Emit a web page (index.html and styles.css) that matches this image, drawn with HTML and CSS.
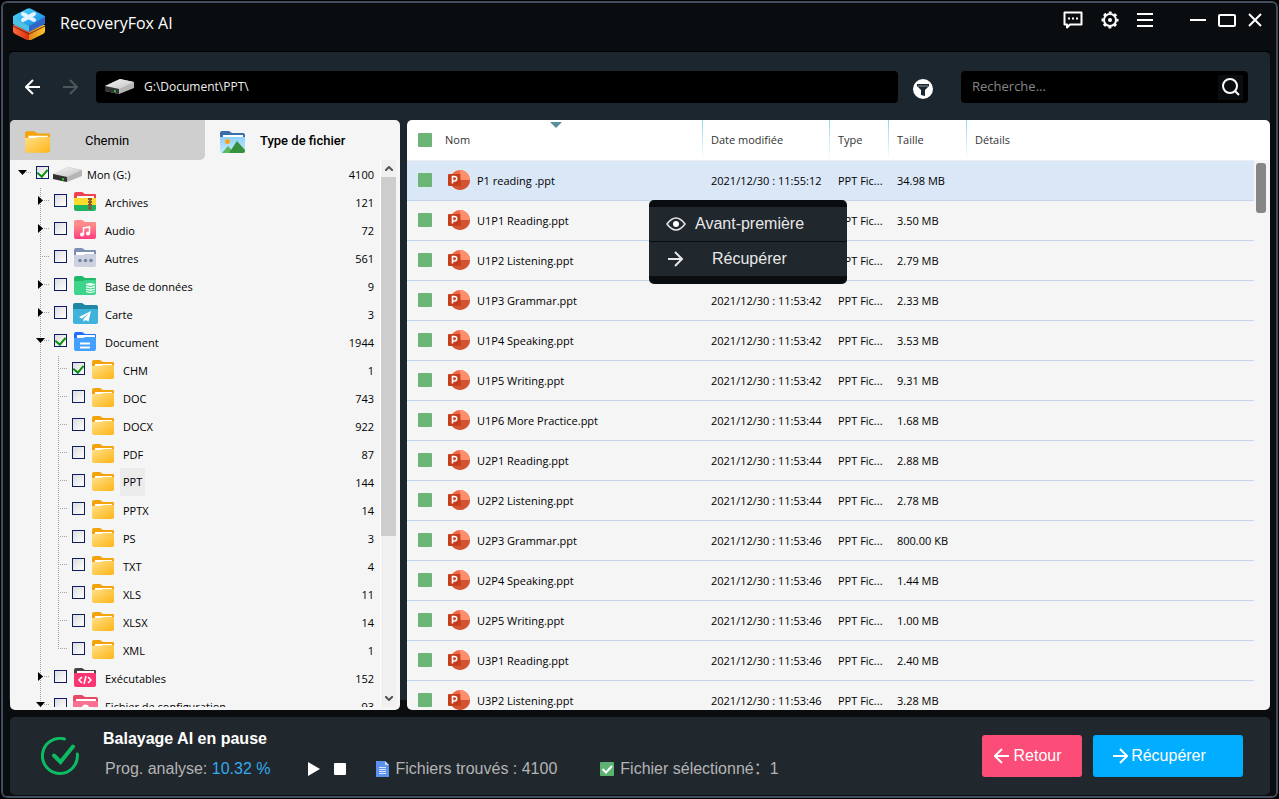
FILE: index.html
```
<!DOCTYPE html>
<html lang="fr">

<head>
    <meta charset="utf-8">
    <title>RecoveryFox AI</title>
    <link rel="stylesheet" href="styles.css">
</head>

<body>
    <!-- shared icons -->
    <svg class="defs" aria-hidden="true">
        <defs>
            <linearGradient id="gYellow" x1="0" y1="0" x2="1" y2="1">
                <stop offset="0" stop-color="#ffe08a" />
                <stop offset="1" stop-color="#fdb515" />
            </linearGradient>
            <linearGradient id="gPink" x1="0" y1="0" x2="0" y2="1">
                <stop offset="0" stop-color="#ff8a8a" />
                <stop offset="1" stop-color="#ff3d7f" />
            </linearGradient>
            <linearGradient id="gSky" x1="0" y1="0" x2="0" y2="1">
                <stop offset="0" stop-color="#8fd0fa" />
                <stop offset="1" stop-color="#c5ecff" />
            </linearGradient>
            <linearGradient id="gDrive" x1="0" y1="0" x2="1" y2="1">
                <stop offset="0" stop-color="#f4f4f4" />
                <stop offset="1" stop-color="#c4c4c4" />
            </linearGradient>
            <linearGradient id="gTop" x1="0" y1="0" x2="1" y2="1">
                <stop offset="0" stop-color="#4fdcff" />
                <stop offset="1" stop-color="#1683e0" />
            </linearGradient>
            <linearGradient id="gBase" x1="0" y1="0" x2="1" y2="0">
                <stop offset="0" stop-color="#ff6a3c" />
                <stop offset=".5" stop-color="#d8310f" />
                <stop offset=".51" stop-color="#e2851a" />
                <stop offset="1" stop-color="#ffc62e" />
            </linearGradient>
        </defs>
        <symbol id="folder" viewBox="0 0 22 19">
            <path d="M0 2a2 2 0 0 1 2-2h6l3 2h10a1 1 0 0 1 1 1v8H0z" fill="#f5a30a" />
            <path d="M3 4h17v4H3z" fill="#fff" />
            <path d="M0 6h9l2-1h11v12a2 2 0 0 1-2 2H2a2 2 0 0 1-2-2z" fill="url(#gYellow)" />
        </symbol>
        <symbol id="drive" viewBox="0 0 29 15">
            <path d="M0 7 15 0l14 3v6L14 15 0 12z" fill="#b5b5b5" />
            <path d="M0 7 15 0l14 3-15 7z" fill="url(#gDrive)" />
            <path d="M0 7l14 3v5L0 12z" fill="#333" />
            <path d="M9 11l2 .5v2L9 13z" fill="#2bd02b" />
        </symbol>
        <symbol id="archives" viewBox="0 0 22 19">
            <path d="M0 2a2 2 0 0 1 2-2h6l3 2h10a1 1 0 0 1 1 1v6H0z" fill="#ef4250" />
            <path d="M3 4h17v4H3z" fill="#fff" />
            <path d="M0 6h22v7H0z" fill="#fddc2c" />
            <path d="M0 13h22v4a2 2 0 0 1-2 2H2a2 2 0 0 1-2-2z" fill="#1fb364" />
            <path d="M16 6v12" stroke="#8a5a3c" stroke-width="4" stroke-dasharray="2 1" />
            <path d="M16 6v12" stroke="#8a5a3c" stroke-width="2" />
        </symbol>
        <symbol id="audio" viewBox="0 0 22 19">
            <path d="M0 2a2 2 0 0 1 2-2h6l3 2h10a1 1 0 0 1 1 1v8H0z" fill="#ff8b8b" />
            <path d="M0 5h22v12a2 2 0 0 1-2 2H2a2 2 0 0 1-2-2z" fill="url(#gPink)" />
            <path d="M9.500 14.500V8l6-1v6" fill="none" stroke="#fff" stroke-width="1.500" />
            <circle cx="8" cy="14.500" r="2" fill="#fff" />
            <circle cx="14" cy="13.500" r="2" fill="#fff" />
        </symbol>
        <symbol id="other" viewBox="0 0 22 19">
            <path d="M0 2a2 2 0 0 1 2-2h6l3 2h10a1 1 0 0 1 1 1v8H0z" fill="#7f8fb0" />
            <path d="M2 4h18v4H2z" fill="#fff" />
            <path d="M0 7h9l2-1h11v11a2 2 0 0 1-2 2H2a2 2 0 0 1-2-2z" fill="#cbd1de" />
            <g fill="#7480a5"><circle cx="6" cy="12.500" r="1.700" /><circle cx="11.500" cy="12.500" r="1.700" /><circle cx="17" cy="12.500" r="1.700" /></g>
        </symbol>
        <symbol id="database" viewBox="0 0 22 19">
            <path d="M0 2a2 2 0 0 1 2-2h6l3 2h10a1 1 0 0 1 1 1v8H0z" fill="#22b869" />
            <path d="M0 5h9l2-1h11v13a2 2 0 0 1-2 2H2a2 2 0 0 1-2-2z" fill="#3fd48b" />
            <path d="M12 8q4-2 9 0v8q-5 2-9 0z" fill="#eafff3" />
            <path d="M12 9.500q5 2 9 0M12 12q5 2 9 0M12 14.500q5 2 9 0" fill="none" stroke="#3fd48b" />
        </symbol>
        <symbol id="map" viewBox="0 0 25 22">
            <path d="M0 2a2 2 0 0 1 2-2h7l3 2h11a2 2 0 0 1 2 2v6H0z" fill="#1f86a4" />
            <path d="M0 6h25v13a2 2 0 0 1-2 2H2a2 2 0 0 1-2-2z" fill="#3fb3dc" />
            <path d="M18 8 6 14l3 1.500L16 10l-5.500 6v3l2-2 3 1.500z" fill="#fff" />
        </symbol>
        <symbol id="doc" viewBox="0 0 22 19">
            <path d="M0 2a2 2 0 0 1 2-2h6l3 2h10a1 1 0 0 1 1 1v8H0z" fill="#2070ff" />
            <path d="M3 3h18v5H3z" fill="#fff" />
            <path d="M0 6h9l2-1h11v12a2 2 0 0 1-2 2H2a2 2 0 0 1-2-2z" fill="#43a0ff" />
            <path d="M6 11.500h10M6 15.500h10" stroke="#fff" stroke-width="2" />
        </symbol>
        <symbol id="exe" viewBox="0 0 22 19">
            <path d="M0 2a2 2 0 0 1 2-2h6l3 2h10a1 1 0 0 1 1 1v8H0z" fill="#444" />
            <path d="M3 3h17v4H3z" fill="#fff" />
            <path d="M0 5h22v12a2 2 0 0 1-2 2H2a2 2 0 0 1-2-2z" fill="#fb3472" />
            <path d="M8 9l-3 3 3 3M14 9l3 3-3 3M12 8l-2 8" fill="none" stroke="#fff" stroke-width="1.500" />
        </symbol>
        <symbol id="config" viewBox="0 0 25 22">
            <path d="M0 2a2 2 0 0 1 2-2h7l3 2h11a2 2 0 0 1 2 2v6H0z" fill="#e64a67" />
            <path d="M3 4h20v5H3z" fill="#fff" />
            <path d="M0 6h25v13a2 2 0 0 1-2 2H2a2 2 0 0 1-2-2z" fill="#fb6f92" />
            <circle cx="12.500" cy="13" r="3.500" fill="#fff" />
        </symbol>
        <symbol id="picture" viewBox="0 0 25 22">
            <path d="M0 2a2 2 0 0 1 2-2h7l3 2h11a2 2 0 0 1 2 2v6H0z" fill="#3a6ea8" />
            <path d="M3 4h20v4H3z" fill="#fff" />
            <path d="M0 6h25v14a2 2 0 0 1-2 2H2a2 2 0 0 1-2-2z" fill="url(#gSky)" />
            <circle cx="7.500" cy="10.500" r="2.500" fill="#f9a51a" />
            <path d="M2 22l6-7 7 7z" fill="#5cb85c" />
            <path d="M9 22l8-12 8 9v1a2 2 0 0 1-2 2z" fill="#36913f" />
        </symbol>
        <symbol id="ppt" viewBox="0 0 22 22">
            <circle cx="12" cy="11" r="10" fill="#ed6c47" />
            <path d="M12 1a10 10 0 0 1 10 10H12z" fill="#ff8f6b" />
            <path d="M2 11h20a10 10 0 0 1-20 0z" fill="#d35230" />
            <rect x="1" y="5" width="12" height="12" fill="#a33015" opacity=".35" />
            <rect x="0" y="5" width="12" height="12" rx="1" fill="#c43e1c" />
            <path d="M4.500 14.500v-7h2a2 2 0 0 1 0 4.500h-2" fill="none" stroke="#fff" stroke-width="1.600" />
        </symbol>
        <symbol id="left" viewBox="0 0 16 16">
            <path d="M15 8H1.500M8 1 1 8l7 7" fill="none" stroke="currentColor" stroke-width="2" />
        </symbol>
        <symbol id="right" viewBox="0 0 16 16">
            <path d="M1 8h13.500M8 1l7 7-7 7" fill="none" stroke="currentColor" stroke-width="2" />
        </symbol>
        <symbol id="open" viewBox="0 0 26 10">
            <path d="M8 2h9l-4.500 5z" />
        </symbol>
        <symbol id="closed" viewBox="0 0 26 10">
            <path d="M10 0v9l5-4.500z" />
        </symbol>
    </svg>

    <div class="window">
        <header class="titlebar">
            <svg class="logo" width="32" height="32" viewBox="0 0 32 32">
                <path d="M0 17v6q0 2 2 3l12 6q2 1 4 0l12-6q2-1 2-3v-6z" fill="url(#gBase)" />
                <path d="M0 18l16 8 16-8" fill="none" stroke="#7a2a12" stroke-width="1" />
                <path d="M0 8v8l16 8 16-8V8z" fill="#2f66c8" />
                <path d="M0 8v8l16 8V16z" fill="#4cc3e4" />
                <path d="M0 8.500Q0 8 2 7L14 .8q2-1 4 0L30 7q2 1 2 1.500T30 10l-12 7q-2 1-4 0L2 10Q0 9 0 8.500z" fill="url(#gTop)" />
                <path d="M10 6l11 6M21 6l-11 6" stroke="#e4f4ff" stroke-width="4" stroke-linecap="round" />
            </svg>
            <h1>RecoveryFox AI</h1>
            <div class="tools">
                <button aria-label="Messages"><svg width="20" height="18" viewBox="0 0 20 18"><path d="M1.500 1.500h17v12H7l-3 3v-3H1.500z" fill="none" stroke="#fff" stroke-width="2" stroke-linejoin="round" /><path d="M5 6.500h2v2H5zM9 6.500h2v2H9zM13 6.500h2v2h-2z" fill="#fff" /></svg></button>
                <button aria-label="Paramètres"><svg width="18" height="18" viewBox="0 0 18 18" fill="none" stroke="#fff"><circle cx="9" cy="9" r="6" stroke-width="2" /><circle cx="9" cy="9" r="7.500" stroke-width="2" stroke-dasharray="3 2.890" stroke-dashoffset="1.500" /><circle cx="9" cy="9" r="2" fill="#fff" stroke="none" /></svg></button>
                <button aria-label="Menu"><svg width="16" height="16" viewBox="0 0 16 16"><path d="M0 2h16M0 8h16M0 14h16" stroke="#fff" stroke-width="2" /></svg></button>
            </div>
            <div class="controls">
                <button aria-label="Réduire"><svg width="16" height="16" viewBox="0 0 16 16"><path d="M0 8h16" stroke="#fff" stroke-width="2" /></svg></button>
                <button aria-label="Agrandir"><svg width="18" height="14" viewBox="0 0 18 14"><rect x="1" y="2" width="16" height="11" rx="1" fill="none" stroke="#fff" stroke-width="2" /></svg></button>
                <button aria-label="Fermer"><svg width="14" height="14" viewBox="0 0 14 14"><path d="M1 1l12 12M13 1 1 13" stroke="#fff" stroke-width="2" /></svg></button>
            </div>
        </header>

        <main>
            <div class="toolbar">
                <button class="nav" aria-label="Précédent"><svg width="16" height="16"><use href="#left" /></svg></button>
                <button class="nav off" aria-label="Suivant"><svg width="16" height="16"><use href="#right" /></svg></button>
                <div class="path">
                    <svg width="29" height="15"><use href="#drive" /></svg>
                    <span>G:\Document\PPT\</span>
                </div>
                <button class="filter" aria-label="Filtrer"><svg width="20" height="20" viewBox="0 0 20 20"><circle cx="10" cy="10" r="10" fill="#fff" /><path d="M4 5h12v2l-4 4v6l-4-1v-5L4 7z" fill="#1b262e" /><path d="M5 7h10" stroke="#8b949a" /></svg></button>
                <div class="search">
                    <input type="text" placeholder="Recherche..." aria-label="Recherche">
                    <button aria-label="Rechercher"><svg width="18" height="18" viewBox="0 0 18 18"><circle cx="8" cy="8" r="7" fill="none" stroke="#fff" stroke-width="2" /><path d="M13 13l4 4" stroke="#fff" stroke-width="2" /></svg></button>
                </div>
            </div>

            <div class="panels">
                <aside class="side">
                    <div class="tabs">
                        <button class="tab"><svg width="25" height="22"><use href="#folder" /></svg><span>Chemin</span></button>
                        <button class="tab active"><svg width="25" height="22"><use href="#picture" /></svg><span>Type de fichier</span></button>
                    </div>
                    <div class="tree-wrap">
                        <ul class="tree">
                            <li>
                                <div class="row"><button class="toggle" aria-label="Replier"><svg><use href="#open" /></svg></button><label><input type="checkbox" checked><svg class="ico wide"><use href="#drive" /></svg><span>Mon (G:)</span></label><b>4100</b></div>
                                <ul>
                                    <li><div class="row"><button class="toggle" aria-label="Déplier"><svg><use href="#closed" /></svg></button><label><input type="checkbox"><svg class="ico"><use href="#archives" /></svg><span>Archives</span></label><b>121</b></div></li>
                                    <li><div class="row"><button class="toggle" aria-label="Déplier"><svg><use href="#closed" /></svg></button><label><input type="checkbox"><svg class="ico"><use href="#audio" /></svg><span>Audio</span></label><b>72</b></div></li>
                                    <li><div class="row"><i class="toggle"></i><label><input type="checkbox"><svg class="ico"><use href="#other" /></svg><span>Autres</span></label><b>561</b></div></li>
                                    <li><div class="row"><button class="toggle" aria-label="Déplier"><svg><use href="#closed" /></svg></button><label><input type="checkbox"><svg class="ico"><use href="#database" /></svg><span>Base de données</span></label><b>9</b></div></li>
                                    <li><div class="row"><button class="toggle" aria-label="Déplier"><svg><use href="#closed" /></svg></button><label><input type="checkbox"><svg class="ico big"><use href="#map" /></svg><span>Carte</span></label><b>3</b></div></li>
                                    <li>
                                        <div class="row"><button class="toggle" aria-label="Replier"><svg><use href="#open" /></svg></button><label><input type="checkbox" checked><svg class="ico"><use href="#doc" /></svg><span>Document</span></label><b>1944</b></div>
                                        <ul class="leaves">
                                            <li><div class="row"><i class="toggle"></i><label><input type="checkbox" checked><svg class="ico"><use href="#folder" /></svg><span>CHM</span></label><b>1</b></div></li>
                                            <li><div class="row"><i class="toggle"></i><label><input type="checkbox"><svg class="ico"><use href="#folder" /></svg><span>DOC</span></label><b>743</b></div></li>
                                            <li><div class="row"><i class="toggle"></i><label><input type="checkbox"><svg class="ico"><use href="#folder" /></svg><span>DOCX</span></label><b>922</b></div></li>
                                            <li><div class="row"><i class="toggle"></i><label><input type="checkbox"><svg class="ico"><use href="#folder" /></svg><span>PDF</span></label><b>87</b></div></li>
                                            <li><div class="row"><i class="toggle"></i><label><input type="checkbox"><svg class="ico"><use href="#folder" /></svg><span class="current">PPT</span></label><b>144</b></div></li>
                                            <li><div class="row"><i class="toggle"></i><label><input type="checkbox"><svg class="ico"><use href="#folder" /></svg><span>PPTX</span></label><b>14</b></div></li>
                                            <li><div class="row"><i class="toggle"></i><label><input type="checkbox"><svg class="ico"><use href="#folder" /></svg><span>PS</span></label><b>3</b></div></li>
                                            <li><div class="row"><i class="toggle"></i><label><input type="checkbox"><svg class="ico"><use href="#folder" /></svg><span>TXT</span></label><b>4</b></div></li>
                                            <li><div class="row"><i class="toggle"></i><label><input type="checkbox"><svg class="ico"><use href="#folder" /></svg><span>XLS</span></label><b>11</b></div></li>
                                            <li><div class="row"><i class="toggle"></i><label><input type="checkbox"><svg class="ico"><use href="#folder" /></svg><span>XLSX</span></label><b>14</b></div></li>
                                            <li><div class="row"><i class="toggle"></i><label><input type="checkbox"><svg class="ico"><use href="#folder" /></svg><span>XML</span></label><b>1</b></div></li>
                                        </ul>
                                    </li>
                                    <li><div class="row"><button class="toggle" aria-label="Déplier"><svg><use href="#closed" /></svg></button><label><input type="checkbox"><svg class="ico"><use href="#exe" /></svg><span>Exécutables</span></label><b>152</b></div></li>
                                    <li><div class="row"><button class="toggle" aria-label="Replier"><svg><use href="#open" /></svg></button><label><input type="checkbox"><svg class="ico big"><use href="#config" /></svg><span>Fichier de configuration</span></label><b>93</b></div></li>
                                </ul>
                            </li>
                        </ul>
                        <div class="scroll">
                            <button aria-label="Monter"><svg width="8" height="5" viewBox="0 0 8 5"><path d="M0 5l4-4 4 4" fill="none" stroke="#555" stroke-width="2" /></svg></button>
                            <div class="track"><div class="thumb"></div></div>
                            <button aria-label="Descendre"><svg width="8" height="5" viewBox="0 0 8 5"><path d="M0 0l4 4 4-4" fill="none" stroke="#555" stroke-width="2" /></svg></button>
                        </div>
                    </div>
                </aside>

                <section class="files">
                    <div class="list">
                        <table>
                            <colgroup>
                                <col class="c-name">
                                <col class="c-date">
                                <col class="c-type">
                                <col class="c-size">
                                <col>
                            </colgroup>
                            <thead>
                                <tr>
                                    <th><label><input type="checkbox" aria-label="Tout sélectionner">Nom</label></th>
                                    <th>Date modifiée</th>
                                    <th>Type</th>
                                    <th>Taille</th>
                                    <th>Détails</th>
                                </tr>
                            </thead>
                            <tbody>
                                <tr class="selected">
                                    <td><label><input type="checkbox"><svg><use href="#ppt" /></svg>P1 reading .ppt</label></td>
                                    <td>2021/12/30 : 11:55:12</td><td>PPT Fic...</td><td>34.98 MB</td><td></td>
                                </tr>
                                <tr>
                                    <td><label><input type="checkbox"><svg><use href="#ppt" /></svg>U1P1 Reading.ppt</label></td>
                                    <td>2021/12/30 : 11:53:42</td><td>PPT Fic...</td><td>3.50 MB</td><td></td>
                                </tr>
                                <tr>
                                    <td><label><input type="checkbox"><svg><use href="#ppt" /></svg>U1P2 Listening.ppt</label></td>
                                    <td>2021/12/30 : 11:53:42</td><td>PPT Fic...</td><td>2.79 MB</td><td></td>
                                </tr>
                                <tr>
                                    <td><label><input type="checkbox"><svg><use href="#ppt" /></svg>U1P3 Grammar.ppt</label></td>
                                    <td>2021/12/30 : 11:53:42</td><td>PPT Fic...</td><td>2.33 MB</td><td></td>
                                </tr>
                                <tr>
                                    <td><label><input type="checkbox"><svg><use href="#ppt" /></svg>U1P4 Speaking.ppt</label></td>
                                    <td>2021/12/30 : 11:53:42</td><td>PPT Fic...</td><td>3.53 MB</td><td></td>
                                </tr>
                                <tr>
                                    <td><label><input type="checkbox"><svg><use href="#ppt" /></svg>U1P5 Writing.ppt</label></td>
                                    <td>2021/12/30 : 11:53:42</td><td>PPT Fic...</td><td>9.31 MB</td><td></td>
                                </tr>
                                <tr>
                                    <td><label><input type="checkbox"><svg><use href="#ppt" /></svg>U1P6 More Practice.ppt</label></td>
                                    <td>2021/12/30 : 11:53:44</td><td>PPT Fic...</td><td>1.68 MB</td><td></td>
                                </tr>
                                <tr>
                                    <td><label><input type="checkbox"><svg><use href="#ppt" /></svg>U2P1 Reading.ppt</label></td>
                                    <td>2021/12/30 : 11:53:44</td><td>PPT Fic...</td><td>2.88 MB</td><td></td>
                                </tr>
                                <tr>
                                    <td><label><input type="checkbox"><svg><use href="#ppt" /></svg>U2P2 Listening.ppt</label></td>
                                    <td>2021/12/30 : 11:53:44</td><td>PPT Fic...</td><td>2.78 MB</td><td></td>
                                </tr>
                                <tr>
                                    <td><label><input type="checkbox"><svg><use href="#ppt" /></svg>U2P3 Grammar.ppt</label></td>
                                    <td>2021/12/30 : 11:53:46</td><td>PPT Fic...</td><td>800.00 KB</td><td></td>
                                </tr>
                                <tr>
                                    <td><label><input type="checkbox"><svg><use href="#ppt" /></svg>U2P4 Speaking.ppt</label></td>
                                    <td>2021/12/30 : 11:53:46</td><td>PPT Fic...</td><td>1.44 MB</td><td></td>
                                </tr>
                                <tr>
                                    <td><label><input type="checkbox"><svg><use href="#ppt" /></svg>U2P5 Writing.ppt</label></td>
                                    <td>2021/12/30 : 11:53:46</td><td>PPT Fic...</td><td>1.00 MB</td><td></td>
                                </tr>
                                <tr>
                                    <td><label><input type="checkbox"><svg><use href="#ppt" /></svg>U3P1 Reading.ppt</label></td>
                                    <td>2021/12/30 : 11:53:46</td><td>PPT Fic...</td><td>2.40 MB</td><td></td>
                                </tr>
                                <tr>
                                    <td><label><input type="checkbox"><svg><use href="#ppt" /></svg>U3P2 Listening.ppt</label></td>
                                    <td>2021/12/30 : 11:53:46</td><td>PPT Fic...</td><td>3.28 MB</td><td></td>
                                </tr>
                            </tbody>
                        </table>
                    </div>
                    <div class="bar"><div class="bar-thumb"></div></div>
                    <div class="menu">
                        <button><svg width="20" height="14" viewBox="0 0 20 14"><path d="M1 7q9-12 18 0-9 12-18 0z" fill="none" stroke="#e8e8e8" stroke-width="1.500" /><circle cx="10" cy="7" r="3" fill="#fff" /></svg><span>Avant-première</span></button>
                        <button><svg width="18" height="16"><use href="#right" /></svg><span>Récupérer</span></button>
                    </div>
                </section>
            </div>
        </main>

        <footer>
            <svg class="done" width="38" height="38" viewBox="0 0 38 38" fill="none" stroke="#0dbb62" stroke-width="3" stroke-linecap="round">
                <path d="M23.500 2A17.500 17.500 0 1 0 36.300 17" />
                <path d="M13 18.500l6.500 6.500L32 9.500" stroke-width="4" />
            </svg>
            <div class="status">
                <h2>Balayage AI en pause</h2>
                <div class="stats">
                    <span class="progress">Prog. analyse: <em>10.32 %</em></span>
                    <button aria-label="Reprendre"><svg width="12" height="14" viewBox="0 0 12 14"><path d="M0 0l12 7-12 7z" fill="#fff" /></svg></button>
                    <button aria-label="Arrêter"><svg width="12" height="12" viewBox="0 0 12 12"><rect width="12" height="12" rx="1" fill="#fff" /></svg></button>
                    <span class="found"><svg width="13" height="16" viewBox="0 0 13 16"><path d="M0 0h9l4 4v12H0z" fill="#5b92ee" /><path d="M9 0v4h4z" fill="#c6dbff" /><path d="M3 6.500h7M3 8.500h7M3 10.500h7M3 12.500h7" stroke="#dbe8ff" /></svg>Fichiers trouvés : 4100</span>
                    <span class="picked"><svg width="14" height="14" viewBox="0 0 14 14"><rect width="14" height="14" rx="1" fill="#5cb270" /><path d="M2.500 7l3.500 3.500L12 4" fill="none" stroke="#fff" stroke-width="2" /></svg>Fichier sélectionné：1</span>
                </div>
            </div>
            <button class="btn back"><svg width="16" height="16"><use href="#left" /></svg>Retour</button>
            <button class="btn recover"><svg width="16" height="16"><use href="#right" /></svg>Récupérer</button>
        </footer>
    </div>
</body>

</html>
```
FILE: styles.css
```
* {
    box-sizing: border-box;
}

body {
    margin: 0;
    background: #000;
    font-family: 'Open Sans', sans-serif;
    font-size: 11px;
    color: #000;
}

button {
    margin: 0;
    padding: 0;
    border: 0;
    background: none;
    font: inherit;
    color: inherit;
    display: flex;
    align-items: center;
    justify-content: center;
    cursor: pointer;
}

svg {
    display: block;
    flex: none;
}

.defs {
    position: absolute;
    width: 0;
    height: 0;
}

.window {
    height: 100vh;
    border: 1px solid #000;
    border-radius: 7px;
    box-shadow: inset 0 0 0 2px #434d60;
    background: #0a0d10;
    padding: 3px 8px 3px 8px;
    display: flex;
    flex-direction: column;
}

/* title bar */
.titlebar {
    height: 48px;
    flex: none;
    display: flex;
    align-items: flex-start;
    padding: 4px 8px 0 4px;
    border-bottom: 1px solid #000;
}

h1 {
    margin: 4px auto 0 15px;
    font-size: 16px;
    line-height: 22px;
    font-weight: normal;
    color: #fff;
}

.tools,
.controls {
    display: flex;
    align-items: center;
    height: 24px;
    gap: 18px;
}

.controls {
    margin-left: 37px;
    gap: 12px;
}

/* work area */
main {
    flex: 1;
    min-height: 0;
    display: flex;
    flex-direction: column;
    background: linear-gradient(#1b262e, #1b262e) no-repeat 0 0 / 100% calc(100% - 10px);
    border-radius: 5px 5px 0 0;
}

.toolbar {
    display: flex;
    align-items: center;
    padding: 19px 22px 17px 11px;
}

.nav {
    width: 26px;
    height: 26px;
    margin-right: 11px;
    color: #fff;
}

.nav.off {
    margin-right: 13px;
    color: #4c565d;
}

.path {
    flex: 1;
    height: 32px;
    background: #000;
    border-radius: 4px;
    display: flex;
    align-items: center;
    gap: 10px;
    padding: 0 9px 2px;
    font-size: 12px;
    color: #eee;
}

.filter {
    width: 30px;
    height: 26px;
    margin: 4px 23px 0 10px;
}

.search {
    width: 287px;
    height: 32px;
    background: #000;
    border-radius: 4px;
    display: flex;
    align-items: center;
}

.search input {
    flex: 1;
    min-width: 0;
    height: 28px;
    margin-bottom: 2px;
    padding: 0 11px;
    border: 0;
    outline: 0;
    background: none;
    font: inherit;
    font-size: 13px;
    color: #fff;
}

.search input::placeholder {
    color: #868686;
}

.search button {
    width: 25px;
    height: 25px;
    margin-right: 5px;
    background: #0a0d10;
}

.panels {
    flex: 1;
    min-height: 0;
    display: flex;
    gap: 7px;
    padding-left: 1px;
}

/* left panel */
.side {
    width: 390px;
    display: flex;
    flex-direction: column;
    background: #f5f5f5;
    border-radius: 5px;
    overflow: hidden;
}

.tabs {
    display: flex;
    height: 40px;
    flex: none;
}

.tab {
    flex: 1;
    justify-content: flex-start;
    padding-left: 15px;
    font-family: Roboto, sans-serif;
    font-size: 13px;
}

.tab.active {
    font-weight: 500;
}

.tab svg {
    margin-top: 4px;
}

.tab span {
    margin-left: 15px;
}

.tab:not(.active) {
    background: #cfcfcf;
    border-radius: 0 0 5px 0;
}

.tab:not(.active) span {
    margin-left: 35px;
}

.tree-wrap {
    flex: 1;
    min-height: 0;
    display: flex;
    padding: 0 4px 3px 0;
}

.tree {
    flex: 1;
    overflow: hidden;
    border-right: 1px solid #fff;
}

ul {
    list-style: none;
    margin: 0;
    padding: 0;
}

li ul {
    padding-left: 18px;
    background: repeating-linear-gradient(#a0a0a0 0 1px, transparent 1px 2px) no-repeat 30px 0 / 1px 100%;
}

li .leaves {
    background-size: 1px calc(100% - 15px);
}

.row {
    display: flex;
    align-items: center;
    height: 28px;
    padding-right: 6px;
}

.row label {
    display: flex;
    align-items: center;
    flex: 1;
}

.row b {
    font-weight: normal;
}

.toggle {
    width: 26px;
    height: 10px;
    margin-bottom: 2px;
    background: repeating-linear-gradient(to right, #a0a0a0 0 1px, transparent 1px 2px) no-repeat 12px 4px / 10px 1px;
}

.toggle svg {
    width: 26px;
    height: 10px;
}

.row input {
    appearance: none;
    width: 13px;
    height: 13px;
    margin: 0 0 3px;
    border: 1px solid #0d1c63;
    background: linear-gradient(135deg, #dcdcdc, #fff);
    display: grid;
    place-items: center;
}

.row input:checked::after {
    content: "";
    width: 5px;
    height: 8px;
    margin-bottom: 2px;
    border: solid #0a8f0a;
    border-width: 0 2px 2px 0;
    transform: rotate(40deg);
}

.ico {
    width: 22px;
    height: 19px;
    margin: 0 9px 2px 7px;
}

.ico.big {
    width: 25px;
    height: 22px;
    margin: 0 7px 0 6px;
}

.ico.wide {
    width: 29px;
    height: 15px;
    margin: 0 5px 0 4px;
}

.current {
    background: #ebebeb;
    line-height: 28px;
    margin: 0 -3px;
    padding: 0 3px;
}

.scroll {
    width: 15px;
    display: flex;
    flex-direction: column;
    background: #f0f0f0;
}

.scroll button {
    height: 17px;
}

.track {
    flex: 1;
}

.thumb {
    height: 70%;
    background: #cdcdcd;
}

/* right panel */
.files {
    flex: 1;
    min-width: 0;
    display: flex;
    position: relative;
    background: linear-gradient(#fff 40px, #f5f5f5 40px);
    border-radius: 5px;
}

.list {
    flex: 1;
    overflow: hidden;
    border-radius: 5px 0 0 5px;
}

table {
    width: 100%;
    table-layout: fixed;
    border-collapse: separate;
    border-spacing: 0;
}

.c-name {
    width: 295px;
}

.c-date {
    width: 127px;
}

.c-type {
    width: 59px;
}

.c-size {
    width: 78px;
}

th,
td {
    height: 40px;
    padding: 0 0 1px 9px;
    text-align: left;
    font-weight: normal;
    white-space: nowrap;
}

th {
    height: 41px;
    color: #333;
    border-bottom: 1px solid #eee;
    background: linear-gradient(#8fd6ec, #fff) no-repeat 0 0 / 1px 100%;
}

th:first-child {
    background: none;
    position: relative;
}

/* sort arrow */
th:first-child::after {
    content: "";
    position: absolute;
    top: 2px;
    left: 50%;
    margin-left: -5px;
    border: 6px solid transparent;
    border-top-color: #56909c;
    border-bottom: 0;
}

td {
    border-bottom: 1px solid #c3d6ec;
}

th:first-child,
td:first-child {
    padding-left: 11px;
}

.selected td {
    background: #dae7f7;
}

table label {
    display: flex;
    align-items: center;
}

table input {
    appearance: none;
    width: 14px;
    height: 14px;
    margin: 0 13px 0 0;
    border-radius: 1px;
    background: #6bb577;
}

table svg {
    width: 22px;
    height: 22px;
    margin: 0 7px 0 3px;
}

.bar {
    width: 16px;
    padding: 43px 4px 0 2px;
}

.bar-thumb {
    height: 50px;
    border-radius: 3px;
    background: #868686;
}

/* context menu over the list */
.menu {
    position: absolute;
    left: 242px;
    top: 80px;
    width: 198px;
    padding: 7px 0 8px;
    border-radius: 5px;
    background: #0a0d10;
    font-family: 'Liberation Sans', sans-serif;
    font-size: 16px;
    color: #e8e8e8;
}

.menu button {
    width: 100%;
    height: 34px;
    justify-content: flex-start;
    padding-left: 17px;
    background: #20272d;
}

.menu button + button {
    margin-top: 1px;
}

.menu span {
    margin-left: 9px;
}

.menu button + button span {
    margin-left: 28px;
}

/* status bar */
footer {
    flex: none;
    display: flex;
    align-items: center;
    min-height: 78px;
    margin: 7px 0 0 1px;
    padding: 0 27px 0 31px;
    border-radius: 5px;
    background: #20272d;
    font-family: 'Liberation Sans', 'Noto Sans CJK SC', sans-serif;
    font-size: 16px;
    color: #b4b4b4;
}

.status {
    flex: 1;
    margin-left: 24px;
    padding-bottom: 4px;
}

h2 {
    margin: 0 0 10px;
    font-size: 16px;
    line-height: 20px;
    color: #fff;
}

.stats {
    display: flex;
    align-items: center;
    padding-left: 2px;
    line-height: 20px;
}

.stats em {
    font-style: normal;
    color: #34a9f0;
}

.progress {
    margin-right: 38px;
}

.stats button {
    margin-right: 14px;
}

.found,
.picked {
    display: flex;
    align-items: center;
    gap: 6px;
    margin-left: 16px;
}

.picked {
    margin-left: 43px;
}

.btn {
    height: 42px;
    border-radius: 3px;
    color: #fff;
    gap: 3px;
}

.back {
    width: 100px;
    background: #fb4d78;
    margin-right: 11px;
    padding-right: 8px;
}

.recover {
    width: 150px;
    background: #00adff;
    padding-right: 18px;
}
```
